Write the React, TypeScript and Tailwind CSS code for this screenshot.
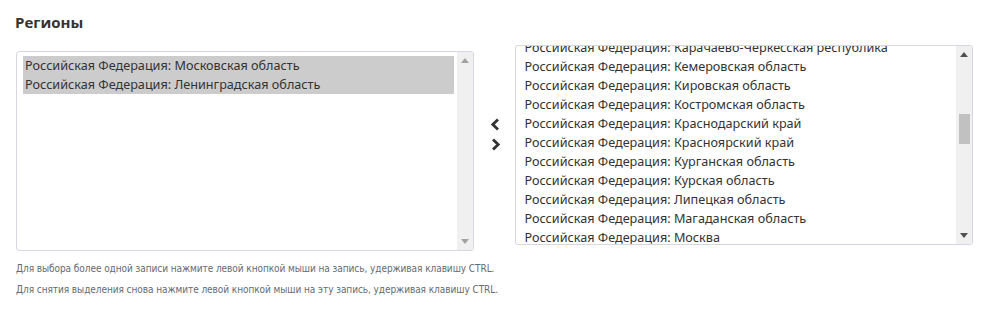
const LEFT = [
  'Российская Федерация: Московская область',
  'Российская Федерация: Ленинградская область',
];

const RIGHT = [
  'Российская Федерация: Карачаево-Черкесская республика',
  'Российская Федерация: Кемеровская область',
  'Российская Федерация: Кировская область',
  'Российская Федерация: Костромская область',
  'Российская Федерация: Краснодарский край',
  'Российская Федерация: Красноярский край',
  'Российская Федерация: Курганская область',
  'Российская Федерация: Курская область',
  'Российская Федерация: Липецкая область',
  'Российская Федерация: Магаданская область',
  'Российская Федерация: Москва',
  'Российская Федерация: Московская область',
];

function Scrollbar({ thumb }: { thumb?: boolean }) {
  const c = thumb ? '#505050' : '#a3a3a3';
  return (
    <div className="w-4 shrink-0 bg-[#f0f0f0] flex flex-col items-center py-[6px]">
      <svg width="8" height="5" viewBox="0 0 8 5">
        <path d="M0 5 L4 0 L8 5 Z" fill={c} />
      </svg>
      {thumb && <div className="w-[11px] h-[30px] bg-[#c1c1c1] mt-[57px]" />}
      <div className="flex-1" />
      <svg width="8" height="5" viewBox="0 0 8 5">
        <path d="M0 0 L8 0 L4 5 Z" fill={c} />
      </svg>
    </div>
  );
}

export default function App() {
  return (
    <div className="w-[989px] h-[318px] bg-white px-4 pt-3 text-[#333]" style={{ fontFamily: '"Noto Sans", "Open Sans", sans-serif' }}>
      <h2 className="text-[15px] font-bold leading-5 -ml-px text-[#333]" style={{ fontFamily: '"Open Sans", sans-serif' }}>Регионы</h2>

      <div className="flex items-start mt-[19px]">
        {/* selected */}
        <div className="w-[459px] h-[200px] border border-[#d5d8de] rounded-[3px] flex overflow-hidden">
          <div className="flex-1 pl-[6px] pr-[3px] pt-1">
            {LEFT.map((r) => (
              <div key={r} className="bg-[#cccccc] px-[2px] h-[19px] leading-[19px] text-[12.65px] whitespace-nowrap">{r}</div>
            ))}
          </div>
          <Scrollbar />
        </div>

        <div className="w-[41px] flex flex-col items-center gap-[7px] pt-[67px] pl-[2px]">
          <svg width="11" height="13" viewBox="0 0 11 13">
            <path d="M8 1.5 L2.8 6.5 L8 11.5" stroke="#333" strokeWidth="2.8" fill="none" />
          </svg>
          <svg width="11" height="13" viewBox="0 0 11 13">
            <path d="M3 1.5 L8.2 6.5 L3 11.5" stroke="#333" strokeWidth="2.8" fill="none" />
          </svg>
        </div>

        {/* available */}
        <div className="w-[459px] h-[200px] -mt-[6px] ml-px border border-[#d5d8de] rounded-[3px] flex overflow-hidden">
          <div className="flex-1 overflow-hidden pl-[6px]">
            <div className="-mt-[8px]">
              {RIGHT.map((r) => (
                <div key={r} className="px-[2px] h-[19px] leading-[19px] text-[12.65px] whitespace-nowrap">{r}</div>
              ))}
            </div>
          </div>
          <Scrollbar thumb />
        </div>
      </div>

      <div className="mt-[7px] text-[10px] leading-[21px] text-[#666a70] tracking-[-0.07px]" style={{ fontFamily: '"DejaVu Sans Condensed", "Noto Sans", sans-serif' }}>
        <p>Для выбора более одной записи нажмите левой кнопкой мыши на запись, удерживая клавишу CTRL.</p>
        <p>Для снятия выделения снова нажмите левой кнопкой мыши на эту запись, удерживая клавишу CTRL.</p>
      </div>
    </div>
  );
}
